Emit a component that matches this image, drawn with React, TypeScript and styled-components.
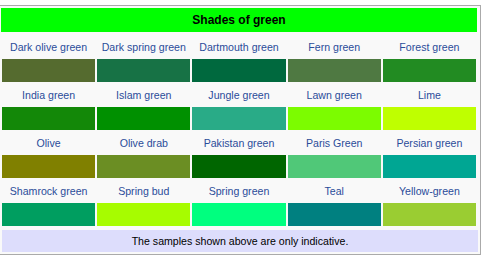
import React from 'react';
import styled, { createGlobalStyle } from 'styled-components';

const GlobalStyle = createGlobalStyle`
  html, body {
    margin: 0;
    padding: 0;
    background: #ffffff;
    overflow: hidden;
  }
`;

const shades = [
  { name: 'Dark olive green', color: '#556b2f' },
  { name: 'Dark spring green', color: '#177245' },
  { name: 'Dartmouth green', color: '#00693e' },
  { name: 'Fern green', color: '#4f7942' },
  { name: 'Forest green', color: '#228b22' },
  { name: 'India green', color: '#138808' },
  { name: 'Islam green', color: '#009000' },
  { name: 'Jungle green', color: '#29ab87' },
  { name: 'Lawn green', color: '#7cfc00' },
  { name: 'Lime', color: '#bfff00' },
  { name: 'Olive', color: '#808000' },
  { name: 'Olive drab', color: '#6b8e23' },
  { name: 'Pakistan green', color: '#006600' },
  { name: 'Paris Green', color: '#50c878' },
  { name: 'Persian green', color: '#00a693' },
  { name: 'Shamrock green', color: '#009e60' },
  { name: 'Spring bud', color: '#a7fc00' },
  { name: 'Spring green', color: '#00ff7f' },
  { name: 'Teal', color: '#008080' },
  { name: 'Yellow-green', color: '#9acd32' },
];

const Panel = styled.div`
  box-sizing: border-box;
  width: 482px;
  margin: 5px 0 0 -1px;
  border: 1px solid #aaaaaa;
  background: #f9f9f9;
  padding: 2px;
  font-family: 'Liberation Sans', Arial, sans-serif;
`;

const Grid = styled.div`
  display: grid;
  grid-template-columns: repeat(5, 1fr);
  column-gap: 2px;
  row-gap: 2px;
  margin-right: 2px;
`;

const Title = styled.div`
  grid-column: 1 / -1;
  height: 24px;
  margin: 0 -1px 2px -1px;
  background: #00ff00;
  color: #000000;
  font-size: 12px;
  font-weight: bold;
  display: flex;
  align-items: center;
  justify-content: center;
`;

const Label = styled.div`
  height: 21px;
  display: flex;
  align-items: center;
  justify-content: center;
  font-size: 10.6px;
  color: #2b4c9a;
  white-space: nowrap;
`;

const Swatch = styled.div<{ $color: string }>`
  height: 23px;
  background: ${p => p.$color};
`;

const Note = styled.div`
  margin-top: 4px;
  height: 22px;
  background: #ddddfc;
  color: #000000;
  font-size: 10.6px;
  display: flex;
  align-items: center;
  justify-content: center;
`;

function App() {
  const rows = [0, 1, 2, 3].map(r => shades.slice(r * 5, r * 5 + 5));

  return (
    <>
      <GlobalStyle />
      <Panel>
        <Grid>
          <Title>Shades of green</Title>
          {rows.map((row, i) => (
            <React.Fragment key={i}>
              {row.map(s => (
                <Label key={s.name}>{s.name}</Label>
              ))}
              {row.map(s => (
                <Swatch key={s.name + '-sw'} $color={s.color} />
              ))}
            </React.Fragment>
          ))}
        </Grid>
        <Note>The samples shown above are only indicative.</Note>
      </Panel>
    </>
  );
}

export default App;
